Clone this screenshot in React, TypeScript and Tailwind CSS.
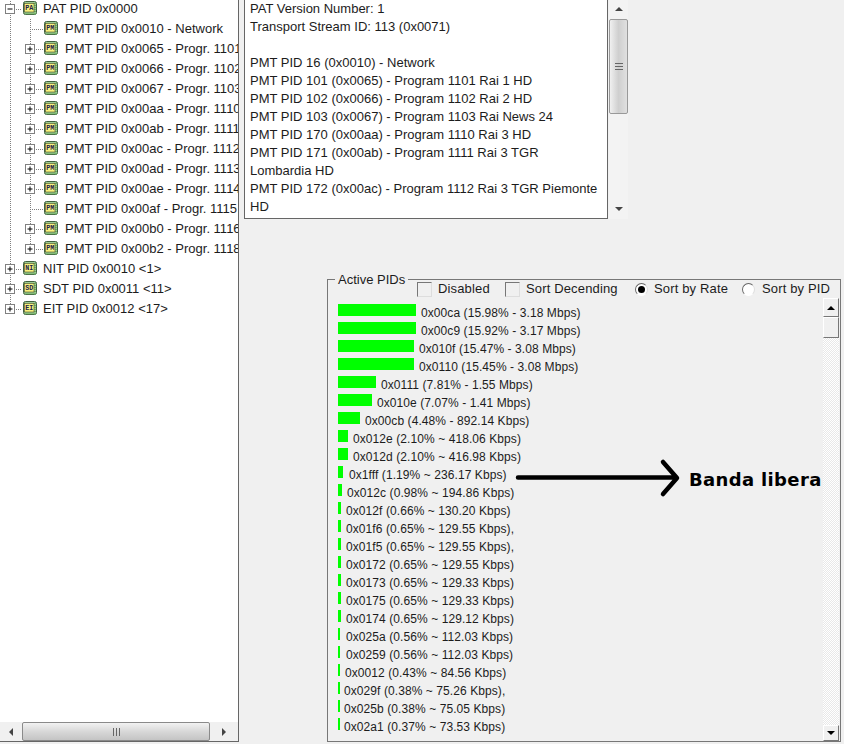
const font = "font-['Liberation_Sans',Arial,sans-serif]"

// [label, bar width, text offset from bar]
const pids: [string, number, number][] = [
  ['0x00ca (15.98% - 3.18 Mbps)', 78, 5],
  ['0x00c9 (15.92% - 3.17 Mbps)', 78, 5],
  ['0x010f (15.47% - 3.08 Mbps)', 76, 5],
  ['0x0110 (15.45% - 3.08 Mbps)', 76, 5],
  ['0x0111 (7.81% - 1.55 Mbps)', 38, 5],
  ['0x010e (7.07% - 1.41 Mbps)', 34, 5],
  ['0x00cb (4.48% - 892.14 Kbps)', 22, 5],
  ['0x012e (2.10% ~ 418.06 Kbps)', 10, 5],
  ['0x012d (2.10% ~ 416.98 Kbps)', 10, 5],
  ['0x1fff (1.19% ~ 236.17 Kbps)', 5, 6],
  ['0x012c (0.98% ~ 194.86 Kbps)', 4, 5],
  ['0x012f (0.66% ~ 130.20 Kbps)', 3, 5],
  ['0x01f6 (0.65% ~ 129.55 Kbps),', 3, 5],
  ['0x01f5 (0.65% ~ 129.55 Kbps),', 3, 5],
  ['0x0172 (0.65% ~ 129.55 Kbps)', 3, 5],
  ['0x0173 (0.65% ~ 129.33 Kbps)', 3, 5],
  ['0x0175 (0.65% ~ 129.33 Kbps)', 3, 5],
  ['0x0174 (0.65% ~ 129.12 Kbps)', 3, 5],
  ['0x025a (0.56% ~ 112.03 Kbps)', 2, 6],
  ['0x0259 (0.56% ~ 112.03 Kbps)', 2, 6],
  ['0x0012 (0.43% ~ 84.56 Kbps)', 2, 5],
  ['0x029f (0.38% ~ 75.26 Kbps),', 2, 4],
  ['0x025b (0.38% ~ 75.05 Kbps)', 2, 4],
  ['0x02a1 (0.37% ~ 73.53 Kbps)', 2, 4],
]

const pmts = [
  ['PMT PID 0x0010 - Network', false],
  ['PMT PID 0x0065 - Progr. 1101', true],
  ['PMT PID 0x0066 - Progr. 1102', true],
  ['PMT PID 0x0067 - Progr. 1103', true],
  ['PMT PID 0x00aa - Progr. 1110', true],
  ['PMT PID 0x00ab - Progr. 1111', true],
  ['PMT PID 0x00ac - Progr. 1112', true],
  ['PMT PID 0x00ad - Progr. 1113', true],
  ['PMT PID 0x00ae - Progr. 1114', true],
  ['PMT PID 0x00af - Progr. 1115', false],
  ['PMT PID 0x00b0 - Progr. 1116', true],
  ['PMT PID 0x00b2 - Progr. 1118', true],
] as [string, boolean][]

const infoLines = [
  'PAT Version Number: 1',
  'Transport Stream ID: 113 (0x0071)',
  '\u00a0',
  'PMT PID 16 (0x0010) - Network',
  'PMT PID 101 (0x0065) - Program 1101 Rai 1 HD',
  'PMT PID 102 (0x0066) - Program 1102 Rai 2 HD',
  'PMT PID 103 (0x0067) - Program 1103 Rai News 24',
  'PMT PID 170 (0x00aa) - Program 1110 Rai 3 HD',
  'PMT PID 171 (0x00ab) - Program 1111 Rai 3 TGR',
  'Lombardia HD',
  'PMT PID 172 (0x00ac) - Program 1112 Rai 3 TGR Piemonte',
  'HD',
]

function TableIcon({ label }: { label: string }) {
  return (
    <svg width="16" height="16" viewBox="0 0 16 16" className="shrink-0 -translate-y-px">
      <rect x="1.5" y="1.5" width="13" height="13" rx="2" fill="#9ccc92" stroke="#3f5f3f" />
      <path d="M13 3v10.5H3" fill="none" stroke="#6fae62" strokeWidth="2" strokeDasharray="1 1" />
      <rect x="2.5" y="3.5" width="9.5" height="8.5" fill="#f8f27c" stroke="#4a4a2a" strokeWidth="0.6" />
      <text x="7.2" y="10.4" textAnchor="middle" fontSize="7" fontWeight="700" fontFamily="Liberation Mono, monospace" fill="#20204a" textLength="8" lengthAdjust="spacingAndGlyphs">
        {label}
      </text>
    </svg>
  )
}

function Expander({ x, open }: { x: number; open?: boolean }) {
  return (
    <g>
      <rect x={x - 4.5} y="5.5" width="9" height="9" fill="#fff" stroke="#808080" />
      <path d={`M${x - 2.5} 10h5`} stroke="#000" />
      {!open && <path d={`M${x} 7.5v5`} stroke="#000" />}
    </g>
  )
}

const dots = { stroke: '#808080', strokeDasharray: '1 1', fill: 'none' }

function TopRow({ label, icon, open, last }: { label: string; icon: string; open?: boolean; last?: boolean }) {
  return (
    <div className="flex h-5 items-center">
      <svg width="22" height="20" className="shrink-0">
        <path d={last ? 'M10.5 0v10' : 'M10.5 0v20'} {...dots} />
        <path d="M14 10.5h8" {...dots} />
        <Expander x={10} open={open} />
      </svg>
      <TableIcon label={icon} />
      <span className="ml-[5px] whitespace-nowrap">{label}</span>
    </div>
  )
}

function PmtRow({ label, expandable, last }: { label: string; expandable: boolean; last: boolean }) {
  return (
    <div className="flex h-5 items-center">
      <svg width="43" height="20" className="shrink-0">
        <path d="M10.5 0v20" {...dots} />
        <path d={last ? 'M30.5 0v10' : 'M30.5 0v20'} {...dots} />
        <path d="M30 10.5h13" {...dots} />
        {expandable && <Expander x={30} />}
      </svg>
      <TableIcon label="PM" />
      <span className="ml-[6px] whitespace-nowrap">{label}</span>
    </div>
  )
}

function Arrow({ dir }: { dir: 'up' | 'down' | 'left' | 'right' }) {
  const d = { up: 'M0 5l4-4 4 4z', down: 'M0 1h8l-4 4z', left: 'M6 0v8l-4-4z', right: 'M2 0v8l4-4z' }[dir]
  return (
    <svg width="8" height="8" viewBox="0 0 8 8" className="shrink-0">
      <path d={d} fill="#444" />
    </svg>
  )
}

function Grip({ vertical }: { vertical?: boolean }) {
  return (
    <div className={vertical ? 'flex flex-col gap-[2px]' : 'flex gap-[2px]'}>
      {[0, 1, 2].map((i) => (
        <div key={i} className={vertical ? 'h-px w-[8px] bg-[#666]' : 'h-[8px] w-px bg-[#666]'} />
      ))}
    </div>
  )
}

export default function App() {
  return (
    <div className={`${font} relative flex h-[744px] w-[844px] overflow-hidden bg-[#f0f0f0] text-[13px] text-[#1c1c1c]`}>
      {/* tree panel */}
      <div className="flex h-[742px] w-[239px] shrink-0 flex-col border-r border-b border-[#666] bg-white">
        <div className="-mt-px min-h-0 flex-1 overflow-hidden">
          <TopRow label="PAT PID 0x0000" icon="PA" open />
          {pmts.map(([label, expandable], i) => (
            <PmtRow key={label} label={label} expandable={expandable} last={i === pmts.length - 1} />
          ))}
          <TopRow label="NIT PID 0x0010 <1>" icon="NI" />
          <TopRow label="SDT PID 0x0011 <11>" icon="SD" />
          <TopRow label="EIT PID 0x0012 <17>" icon="EI" last />
        </div>
        <div className="flex h-[19px] shrink-0 items-center bg-[#f0f0f0]">
          <div className="flex w-[22px] justify-center"><Arrow dir="left" /></div>
          <div className="flex h-[19px] w-[188px] items-center justify-center rounded-[2px] border border-[#8a8a8a] bg-gradient-to-b from-[#f2f2f2] via-[#d8d8d8] to-[#c4c4c4]">
            <Grip />
          </div>
          <div className="flex flex-1 justify-center"><Arrow dir="right" /></div>
        </div>
      </div>

      {/* right side */}
      <div className="flex min-w-0 flex-1 flex-col pl-[5px]">
        <div className="flex h-[219px] shrink-0">
          <div className="h-full w-[364px] overflow-hidden border-r border-b border-l border-[#666] bg-white pl-[5px] leading-[18px]">
            {infoLines.map((line, i) => (
              <div key={i} className="whitespace-nowrap">{line}</div>
            ))}
          </div>
          <div className="ml-px flex w-[19px] flex-col items-center bg-[#f3f3f3]">
            <div className="flex h-[19px] items-center justify-center"><Arrow dir="up" /></div>
            <div className="flex h-[95px] w-full items-center justify-center rounded-[2px] border border-[#999] bg-gradient-to-r from-[#f0f0f0] via-[#cfcfcf] to-[#e0e0e0]">
              <Grip vertical />
            </div>
            <div className="flex-1" />
            <div className="flex h-[19px] items-center justify-center"><Arrow dir="down" /></div>
          </div>
        </div>

        {/* Active PIDs group */}
        <div className="relative mt-[60px] ml-[83px] flex h-[463px] w-[514px] flex-col border border-[#777]">
          <div className="absolute -top-[9px] left-[7px] bg-[#f0f0f0] px-[3px] leading-[17px]">Active PIDs</div>
          <div className="flex h-[18px] shrink-0 items-center pl-[89px] tracking-[0.15px]">
            <label className="flex w-[88px] items-center gap-[6px]">
              <span className="h-[15px] w-[15px] shrink-0 border border-t-[#777] border-r-[#ddd] border-b-[#ddd] border-l-[#777] bg-[#f0f0f0]" />
              Disabled
            </label>
            <label className="flex w-[130px] items-center gap-[6px]">
              <span className="h-[15px] w-[15px] shrink-0 border border-t-[#777] border-r-[#ddd] border-b-[#ddd] border-l-[#777] bg-[#f0f0f0]" />
              Sort Decending
            </label>
            <label className="flex w-[107px] items-center gap-[6px]">
              <span className="flex h-[13px] w-[13px] shrink-0 items-center justify-center rounded-full border border-t-[#666] border-r-[#ddd] border-b-[#fff] border-l-[#666] bg-white">
                <span className="h-[7px] w-[7px] rounded-full bg-black" />
              </span>
              Sort by Rate
            </label>
            <label className="flex items-center gap-[7px]">
              <span className="h-[13px] w-[13px] shrink-0 rounded-full border border-t-[#666] border-r-[#ddd] border-b-[#fff] border-l-[#666] bg-white" />
              Sort by PID
            </label>
          </div>
          <div className="flex min-h-0 flex-1">
            <div className="min-w-0 flex-1 overflow-hidden pt-[6px] pl-[10px] text-[12px] tracking-[0.08px]">
              {pids.map(([label, width, gap]) => (
                <div key={label} className="flex h-[18px] items-start">
                  <div className="h-[12px] shrink-0 bg-[#00ff00]" style={{ width }} />
                  <span className="mt-[2px] whitespace-nowrap leading-[14px]" style={{ marginLeft: gap }}>{label}</span>
                </div>
              ))}
            </div>
            <div className="mr-px flex w-[16px] shrink-0 flex-col bg-[repeating-conic-gradient(#fff_0%_25%,#e8e8e8_0%_50%)] bg-[length:2px_2px]">
              <div className="flex h-[19px] items-center justify-center border border-t-[#fff] border-r-[#777] border-b-[#777] border-l-[#fff] bg-[#f0f0f0]">
                <svg width="8" height="6" viewBox="0 0 8 6"><path d="M0 5l4-4 4 4z" fill="#000" /></svg>
              </div>
              <div className="h-[21px] border border-t-[#fff] border-r-[#777] border-b-[#777] border-l-[#fff] bg-[#f0f0f0]" />
              <div className="flex-1" />
              <div className="flex h-[16px] items-center justify-center border border-t-[#fff] border-r-[#777] border-b-[#777] border-l-[#fff] bg-[#f0f0f0]">
                <svg width="8" height="6" viewBox="0 0 8 6"><path d="M0 1h8l-4 4z" fill="#000" /></svg>
              </div>
            </div>
          </div>
        </div>
      </div>

      {/* hand-drawn annotation */}
      <svg width="170" height="40" className="absolute top-[458px] left-[512px]">
        <path d="M6 19.5H163M151 4l14 16-14 16" fill="none" stroke="#000" strokeWidth="4.5" strokeLinecap="round" strokeLinejoin="round" />
      </svg>
      <div className="absolute top-[469px] left-[689px] font-['DejaVu_Sans',sans-serif] text-[18px] leading-[22px] font-bold tracking-[0.35px] whitespace-nowrap text-black">
        Banda libera
      </div>
    </div>
  )
}
